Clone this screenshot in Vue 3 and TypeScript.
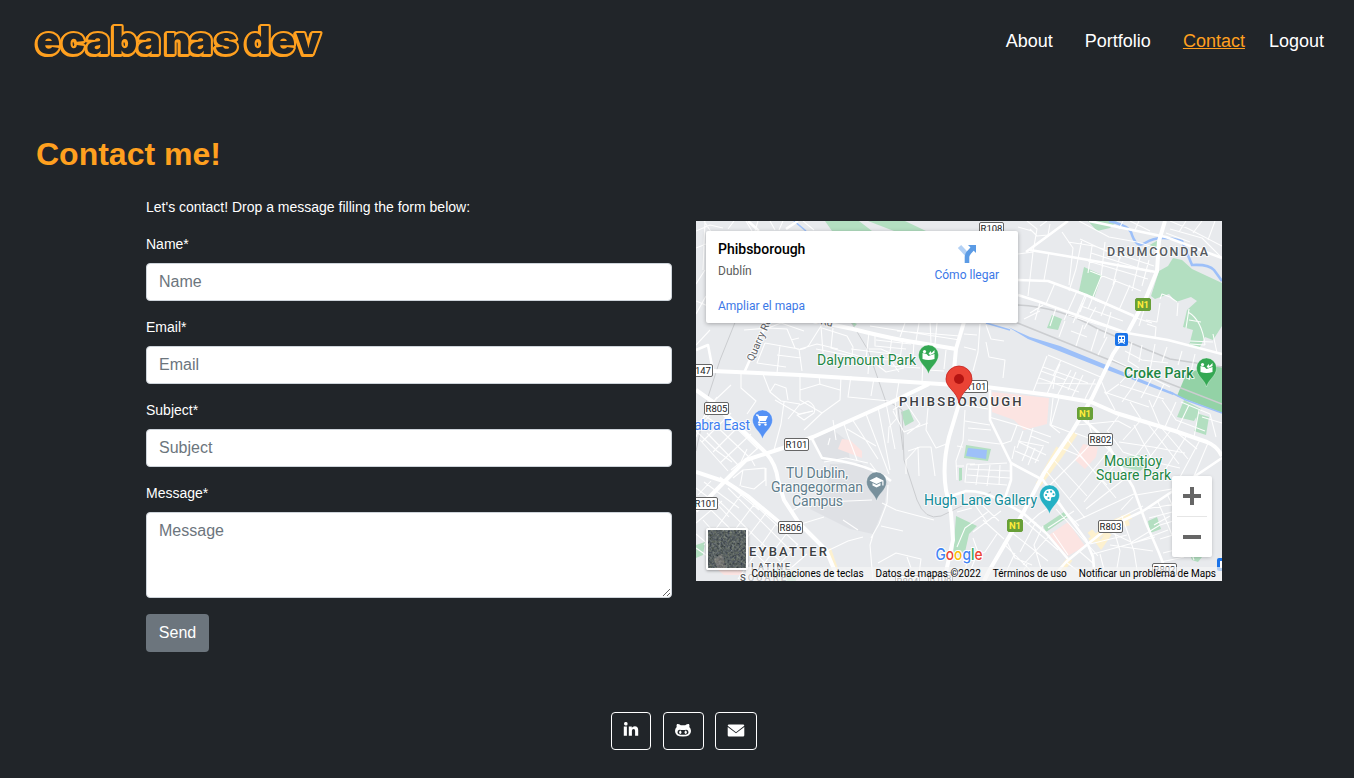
<script setup lang="ts">
interface MapLabel {
  x: number
  y: number
  w: number
  text: string
  size: number
  kind: string
}
interface Badge {
  x: number
  y: number
  w: number
  text: string
  kind: string
}
interface Pin {
  x: number
  y: number
  color: string
  icon: string
}

const links = [
  { text: 'About', active: false },
  { text: 'Portfolio', active: false },
  { text: 'Contact', active: true },
  { text: 'Logout', active: false },
]
const fields = ['Name', 'Email', 'Subject']
const credits = ['Combinaciones de teclas', 'Datos de mapas ©2022', 'Términos de uso', 'Notificar un problema de Maps']

const majorRoads = [
  'M713 371L800 375L925 383L986 387L1050 395L1091 402L1116 413L1175 431L1207 442Q1217 446 1222 456',
  'M1165 221L1159 241L1157 271L1146 298L1129 330L1113 354L1092 398L1073 430L1044 473L1023 513L989 571L984 581',
  'M829 324L853 329Q896 340 926 344L956 349L954 370M964 322L956 349',
  'M959 404L949 437Q942 465 946 490L951 513L953 540L944 581',
  'M929 384L896 400L813 437L783 448L746 460L726 480L696 511',
  'M696 390L713 402L739 427L766 453Q776 464 778 480L784 500L799 523L826 550L839 581',
  'M696 472L726 482L749 497L779 522',
]
const mediumRoads = [
  'M1127 333L1168 340L1222 354',
  'M990 390L990 420L1011 463L1011 480L1004 501',
  'M1011 463L1043 480L1066 513L1086 540L1093 557L1095 581',
  'M948 497L966 491Q985 491 999 500L1023 513L1046 533L1068 559',
  'M1049 581L1066 562L1089 543L1109 527L1143 511L1173 491L1222 458',
  'M1082 418L1103 437L1133 487L1146 523L1159 553L1170 581',
  'M811 437L822 458Q870 464 891 481',
  'M696 350L708 345L713 371M744 373L760 337L775 310',
  'M748 221L759 231M798 221L786 229',
  'M1026 252L1068 221M1030 250L1066 256L1156 272M1089 221L1166 237L1222 258',
  'M1018 280L1048 281L1086 295L1134 316M1018 295L1040 302L1127 333',
]
const minorRoads = [
  // North-west streets
  'M696 231L710 225L723 228M704 221L713 235M705 221L703 270M696 248L706 244M696 284L705 270M696 314L706 296M696 345L710 330M696 301L708 306M734 221L728 229M746 221L752 231M758 221L755 231M770 221L775 230M783 221L779 230M803 221L814 230',
  'M744 330L768 328L787 329L795 348Q803 352 809 345L821 326M768 328L781 323L804 331M765 343L799 349L802 371M780 345L777 373M765 343L757 363L786 367M801 358L777 355M822 328L847 336L853 347L852 356L816 349M800 349L817 344L838 349M791 340L799 338M821 326L823 353',
  'M741 372L741 388L756 401L747 414M763 374L770 392L781 401L800 404M770 392L775 384L786 388L788 400M800 374L800 400L822 413M775 400L799 414L813 411M784 402L781 424L774 450M800 404L788 419M822 413L804 430M822 413L840 400L841 376M800 390L820 384L819 375M819 384L840 390',
  'M833 328L831 348L869 359L868 374M869 332L866 359M869 349L881 349L890 353M851 349L900 355M875 334L875 346L906 349M876 340L911 344M892 336L889 360M903 338L899 366M914 341L913 357M875 360L914 359M876 364L886 372L904 368M887 356L899 372M891 366L920 368M923 359L922 384M946 350L944 369M926 344L927 370L944 371',
  'M851 376L848 397L889 401M874 378L871 396M899 381L896 400M931 344L930 320M870 326L960 340M905 323L900 337M919 323L916 341M937 323L935 344M897 331L960 336',
  // South-west streets
  'M713 402L731 385M717 397L704 415L717 424M707 415L696 425M709 402L696 437M717 407L696 431L717 451L732 462M731 413L702 442M742 423L713 452M751 434L720 463M760 446L733 471M723 415L758 449M714 424L749 457M707 433L738 465M700 440L728 471',
  'M800 405L808 401Q817 406 814 413L804 420L797 415L813 411',
  'M731 470L741 462L747 449M733 478L743 470L765 468L765 480L754 489L741 486M743 470L740 486M750 457L755 466M766 468L766 486',
  'M696 488L717 504L729 517M704 482L739 508M720 477L759 510M711 481L698 495M696 534L738 570M706 505L769 567M718 500L780 561M728 488L790 550M736 487L798 545M743 492L704 545M755 503L714 558M766 513L724 568M776 524L738 579M787 533L751 581M798 544L764 581M807 554L776 581',
  'M696 523L722 501M703 520L730 550M696 548L706 555L714 569M790 512L811 500L825 502M801 524L824 517M825 552L848 541L863 537M825 502L872 500',
  'M828 445L830 438M836 440L833 420M844 424L848 436L857 460M852 419L878 459M866 414L889 474M878 407L890 470M886 403L895 449M847 429L876 446M895 400L897 418L889 427L888 443M824 462L846 458L868 463M870 463L886 484M918 447L919 476M918 447L906 460L906 474',
  'M893 410L905 402L920 424L907 434M893 411L904 432L928 423M928 408L926 430L936 448L949 443M908 451L920 447L931 447L935 476M888 485L887 503L879 524L871 538M882 503L896 510L934 520M881 526L903 531M873 535L870 545L873 581M878 563L896 553L921 559L918 581M907 557L911 568M843 520L858 530',
  // Around the rail station and the northern terraces
  'M1027 221L1037 229L1033 252M1018 227L1032 231M1030 229L1037 236L1048 235L1050 224M1040 226L1047 221M1033 252L1028 296M1033 252L1018 254M1049 252L1044 280M1062 232L1073 248L1069 285M1082 239L1076 269L1069 291M1068 242L1094 246L1154 266M1080 239L1121 258M1091 253L1151 272M1088 261L1148 279M1090 271L1141 291M1092 246L1088 273M1105 242L1101 278M1121 251L1113 285M1140 257L1132 291M1149 260L1142 286',
  'M1055 283L1046 304M1085 295L1073 323M1077 291L1064 320M1130 285L1119 310M1116 279L1101 316M1101 277L1088 309M1087 294L1080 312M1095 300L1130 314M1081 306L1123 321M1068 315L1119 331M1111 312L1104 338M1096 307L1084 329M1083 303L1076 319M1056 308L1050 326M1040 303L1035 320M1065 321L1059 337M1083 325L1076 346M1098 329L1091 351M1107 337L1098 355M1087 337L1071 331M1030 313L1043 305M1024 319L1040 311',
  'M1079 221L1109 237L1137 242L1157 248M1130 221L1150 231M1139 221L1135 230M1170 221L1189 229L1222 246M1186 221L1179 232M1202 221L1193 233M1215 221L1208 240M1170 229L1202 238L1222 258M1166 233L1190 242M1123 221L1119 229',
  'M1160 299L1162 294L1170 297L1177 302M1147 324L1156 327L1155 338M1133 317L1152 323M1145 307L1139 326M1160 303L1157 322L1146 320M1178 303L1177 316M1189 309L1186 328M1188 312Q1202 320 1205 345M1189 320L1201 322M1205 345L1190 344M1190 341L1213 342M1217 353L1213 334',
  'M1132 342L1128 361L1139 368M1142 345L1139 362M1155 344L1150 370M1167 347L1162 362M1182 351L1178 365M1195 354L1189 380M1210 358L1205 376M1125 351L1142 360L1168 363M1111 359L1137 371L1170 387M1133 369L1120 383M1141 373L1130 391M1152 378L1141 398M1164 384L1153 407M1132 388L1122 402M1100 378L1107 395L1115 410M1119 384L1105 394M1120 385L1164 399M1104 392L1149 407',
  'M1047 356L1033 392M1060 364L1047 394M1071 370L1057 396M1083 375L1072 397M1095 379L1085 399M1043 367L1088 383M1039 378L1079 392M1041 371L1066 380M1037 383L1096 384M1053 389L1055 377M1048 355L1103 378M1061 360L1053 376M1076 372L1068 390',
  'M980 324L978 352L973 371M964 347L976 350M977 335L964 334M986 342L989 357L1005 360L1003 378M986 325L991 339L1004 341',
  // South-east streets
  'M1053 398L1050 425L1060 433M1059 398L1051 425L1072 433M989 417L1020 426L1051 437M1017 425L1011 441L1002 444M1018 441L1044 446M1023 431L1017 448M1033 428L1027 448M1015 451L1039 461M1019 442L1046 455M1015 446L1012 459M1028 447L1022 461M1035 448L1028 465M1043 447L1035 463M1031 436L1049 443',
  'M965 410L963 441L956 461L957 480M968 428L991 430M968 440L1000 444M975 464L967 464L965 482L1007 485M979 464L976 485M990 465L987 486M1000 465L999 485M968 469L1010 471M967 475L1010 478M970 465L1007 463M957 446L963 447M956 466L964 466M958 404L988 409M990 425L965 421',
  'M1075 433L1102 443L1121 462M1061 448L1080 456L1107 485M1053 459L1087 496M1047 472L1085 518M1067 439L1116 498M1099 434L1085 450L1045 490M1111 448L1070 498M1119 460L1084 502M1127 477L1086 509M1136 493L1074 522M1143 506L1112 522M1077 425L1118 421L1131 428M1086 412L1092 435M1121 413L1108 430M1141 420L1123 440M1159 426L1134 458M1171 430L1146 462M1187 435L1162 475M1200 440L1173 490M1208 443L1192 481',
  'M1107 430L1123 452L1154 462L1180 468M1119 442L1153 447L1185 453M1134 425L1153 461M1145 420L1179 464M1160 426L1188 459M1175 431L1197 449M1181 402L1210 414L1216 437M1162 400L1176 420L1205 431M1149 400L1160 426M1130 402L1141 419M1176 402L1165 427M1189 405L1176 432M1199 410L1194 437M1202 417L1222 423',
  'M1136 495L1178 488L1186 495M1145 509L1188 502M1149 518L1180 510M1133 497L1121 510M1158 502L1168 525L1178 550M1167 494L1182 525L1194 560M1122 516L1134 551L1137 570M1112 523L1120 551L1117 568M1108 531L1133 543L1168 530M1090 544L1127 535M1093 554L1155 537M1100 554L1107 581M1110 545L1153 551M1132 542L1160 525L1180 519M1160 539L1173 535M1163 553L1191 546M1161 562L1184 557M1170 516L1154 525',
  'M1050 495L1079 526M1056 509L1098 556M1060 500L1039 514L1028 524M1074 511L1048 528M1053 533L1068 555M1043 526L1034 545L1042 572M1025 520L1006 540L1015 558L1032 565M1011 532L1048 561M1003 543L1038 578M1019 516L1058 550M1036 522L1020 552M1050 535L1023 565M997 534L985 552L963 560M973 538L978 552L971 569M960 500L975 505L987 522M976 499L999 521M957 512L972 508M989 511L965 528L957 547M1001 511L973 532M983 520L1004 539M969 552L963 581M1015 553L1002 581M1027 564L1018 581M1066 562L1082 574M1079 551L1094 564',
]

const labels: MapLabel[] = [
  { x: 1107, y: 255.5, w: 101, text: 'DRUMCONDRA', size: 12.5, kind: 'area' },
  { x: 899, y: 406, w: 122.5, text: 'PHIBSBOROUGH', size: 13, kind: 'area strong' },
  { x: 749, y: 556, w: 78, text: 'EYBATTER', size: 13, kind: 'area strong' },
  { x: 751, y: 570, w: 39, text: 'LATINE', size: 9.5, kind: 'area' },
  { x: 740, y: 580.5, w: 46, text: 'SQUARE', size: 9.5, kind: 'area' },
  { x: 817, y: 365, w: 99, text: 'Dalymount Park', size: 14, kind: 'green' },
  { x: 1124, y: 378, w: 69.5, text: 'Croke Park', size: 14, kind: 'green bold' },
  { x: 1104, y: 466, w: 58, text: 'Mountjoy', size: 14, kind: 'green' },
  { x: 1096, y: 480, w: 75, text: 'Square Park', size: 14, kind: 'green' },
  { x: 694, y: 430, w: 56, text: 'abra East', size: 14, kind: 'blue' },
  { x: 786, y: 478, w: 62, text: 'TU Dublin,', size: 14, kind: 'slate' },
  { x: 771, y: 492, w: 92, text: 'Grangegorman', size: 14, kind: 'slate' },
  { x: 792, y: 506, w: 51, text: 'Campus', size: 14, kind: 'slate' },
  { x: 924, y: 505, w: 113, text: 'Hugh Lane Gallery', size: 14, kind: 'teal' },
]
const badges: Badge[] = [
  { x: 979, y: 222, w: 25, text: 'R108', kind: 'regional' },
  { x: 687, y: 364, w: 26, text: 'R147', kind: 'regional' },
  { x: 963, y: 380, w: 25, text: 'R101', kind: 'regional' },
  { x: 704, y: 402, w: 25, text: 'R805', kind: 'regional' },
  { x: 784, y: 438, w: 25, text: 'R101', kind: 'regional' },
  { x: 693, y: 497, w: 25, text: 'R101', kind: 'regional' },
  { x: 778, y: 521, w: 25, text: 'R806', kind: 'regional' },
  { x: 1088, y: 433, w: 25, text: 'R802', kind: 'regional' },
  { x: 1098, y: 520, w: 25, text: 'R803', kind: 'regional' },
  { x: 895, y: 575, w: 25, text: 'R804', kind: 'regional' },
  { x: 928, y: 572, w: 25, text: 'R108', kind: 'regional' },
  { x: 1152, y: 563, w: 25, text: 'R802', kind: 'regional' },
  { x: 1135, y: 298, w: 16, text: 'N1', kind: 'national' },
  { x: 1077, y: 407, w: 16, text: 'N1', kind: 'national' },
  { x: 1007, y: 519, w: 16, text: 'N1', kind: 'national' },
]
const pins: Pin[] = [
  { x: 928.5, y: 374, color: '#34a853', icon: 'field' },
  { x: 1206.5, y: 387, color: '#34a853', icon: 'field' },
  { x: 762.5, y: 439, color: '#5491f5', icon: 'cart' },
  { x: 876.5, y: 501, color: '#78909c', icon: 'school' },
  { x: 1049.5, y: 514, color: '#24b0c4', icon: 'art' },
]
</script>

<template>
  <div class="page">
    <header class="top">
      <svg class="logo" width="296" height="44" viewBox="32 18 296 44" role="img" aria-label="ecabanas dev">
        <text y="54" x="36.5 61.5 86.5 112 137.5 165 189.5 215 239 245.5 271.5 296">ecabanas dev</text>
      </svg>
      <nav>
        <a v-for="link in links" :key="link.text" :class="{ active: link.active }">{{ link.text }}</a>
      </nav>
    </header>

    <h1>Contact me!</h1>

    <main>
      <form @submit.prevent>
        <p>Let's contact! Drop a message filling the form below:</p>
        <div v-for="field in fields" :key="field" class="group">
          <label :for="field">{{ field }}*</label>
          <input :id="field" type="text" :placeholder="field" />
        </div>
        <div class="group">
          <label for="Message">Message*</label>
          <textarea id="Message" placeholder="Message"></textarea>
        </div>
        <button type="submit">Send</button>
      </form>

      <section class="map">
        <svg class="canvas" width="526" height="360" viewBox="696 221 526 360">
          <rect x="696" y="221" width="526" height="360" fill="#e8eaed" />
          <g fill="#dfe1e5">
            <path d="M814 438L833 430L846 440L850 459L822 461Z" />
            <path d="M830 464L861 463L879 477L888 483L884 507L873 534L850 529L810 509L826 491Z" />
          </g>
          <g fill="#b3dfc1">
            <path d="M825 221H859L872 231H832Z M868 221H905L926 231H894Z" />
            <path d="M1088 221H1117L1110 228L1097 231Z" />
            <path d="M1084 267L1102 275L1094 298L1079 291Z" />
            <path d="M1052 315L1062 319L1058 330L1047 328Z" />
            <path d="M1159 271L1168 266L1173 258L1182 260L1192 269L1222 283V326L1213 340L1205 337L1199 349L1189 346L1193 330L1183 327L1187 310L1197 301L1191 297L1176 302L1169 294L1155 299L1151 296Z" />
            <path d="M1187 372L1222 366V413L1177 396Z" fill="#93d2a6" />
            <path d="M1148 246L1160 239L1156 248Z" />
            <path d="M901 412L909 409L914 421L905 426Z" />
            <path d="M959 468H962V480L959 481ZM956 516L977 526L969 534L965 552L953 556Z" />
            <path d="M1043 526L1064 512L1068 517L1046 532Z" />
            <path d="M1184 400L1201 409L1194 421L1177 417Z M1196 413L1209 417L1206 435L1194 431L1197 425Z M1126 457L1140 455L1150 463L1140 471L1123 467Z M1148 521L1157 517L1161 529L1150 533Z M1190 555L1202 557L1198 562L1192 560Z M696 545L705 542L703 555L696 558Z M772 569L795 571L796 581H777Z M850 321L857 324L854 327Z" />
          </g>
          <g fill="#fce4e2">
            <path d="M842 439L850 440L862 451V458L838 449Z" />
            <path d="M992 392L1049 398L1047 424L1024 430L1014 420L992 412Z" />
            <path d="M1083 444L1098 447L1096 457L1085 469L1075 460Z" />
            <path d="M1049 535L1068 522L1085 546L1068 556Z" />
            <path d="M718 570L736 562L744 575H724Z" />
          </g>
          <g class="amber">
            <path d="M1075 433L1058 458L1038 485M1059 448L1043 477M1124 515L1127 526M1115 522L1131 516M1090 531L1101 545L1109 533" />
            <path d="M828 549L837 575M1070 559L1062 569L1051 580M1090 541L1107 529" />
          </g>
          <path class="rail" d="M738 315L720 360L707 400L696 451M842 307L868 350L887 405M888 401L902 410L904 460L917 500Q925 521 941 516L991 492M898 408L903 450" />
          <path class="rail heavy" d="M1018 305Q1060 307 1098 329L1138 346L1170 359L1222 367" />
          <path class="rail heavy" d="M1000 316L1102 357L1168 383L1222 404" />
          <path class="water" d="M794 221L806 231M986 323L1010 330M1170 392L1186 400L1222 413" />
          <path d="M1008 327L1030 337L1060 346L1104 364L1174 393L1173 395L1102 368L1059 351L1028 339Z" fill="#9dc0f9" />
          <path class="water river" d="M1109 221Q1127 225 1131 232Q1136 249 1145 243Q1159 234 1182 241L1192 265Q1209 264 1214 270L1222 281" />
          <path d="M966 445L991 449L988 461L964 458Z" fill="#b3dfc1" />
          <path d="M968 448L987 450L986 459L966 456Z" fill="#9dc0f9" />
          <g class="minor"><path v-for="d in minorRoads" :key="d" :d="d" /></g>
          <g class="medium"><path v-for="d in mediumRoads" :key="d" :d="d" /></g>
          <g class="major"><path v-for="d in majorRoads" :key="d" :d="d" /></g>

          <text class="label street" transform="translate(753 362) rotate(-66)">Quarry Road</text>
          <text class="label street" transform="translate(812 322) rotate(14)">e Rd</text>

          <g v-for="badge in badges" :key="`${badge.x}-${badge.text}`" :class="['badge', badge.kind]">
            <rect :x="badge.x + 0.5" :y="badge.y + 0.5" :width="badge.w - 1" height="12" rx="1.5" />
            <text :x="badge.x + badge.w / 2" :y="badge.y + 10">{{ badge.text }}</text>
          </g>
          <text
            v-for="label in labels"
            :key="label.text"
            :class="['label', label.kind]"
            :x="label.x"
            :y="label.y"
            :font-size="label.size"
            :textLength="label.w"
          >{{ label.text }}</text>

          <g v-for="pin in pins" :key="pin.x" :transform="`translate(${pin.x} ${pin.y})`">
            <path d="M0 0C-1.4-7-10-11-10-19A10 10 0 0 1 10-19C10-11 1.4-7 0 0Z" :fill="pin.color" stroke="#fff" stroke-opacity=".45" stroke-width=".7" />
            <g fill="#fff" transform="translate(0 -19)">
              <g v-if="pin.icon === 'field'">
                <path d="M-6-2L-2-1L0 1L6-1V4Q0 6-6 4ZM-6 3Q-4-1-1 2" />
                <circle cx="-4" cy="-3.4" r="1.6" /><path d="M0-1L2-4L3-2L6-5L6-2L2 0Z" />
              </g>
              <g v-else-if="pin.icon === 'cart'">
                <path d="M-6.5-5.5H-4.2L-3.6-4H5.5L3.2 1H-2.5L-3 2H4V3.3H-4.8L-3.5 .6L-5.2-4.2H-6.5Z" /><circle cx="-3" cy="4.6" r="1.2" /><circle cx="3" cy="4.6" r="1.2" />
              </g>
              <g v-else-if="pin.icon === 'school'">
                <path d="M-7-1.5L0-5L7-1.5V3.5H5.8V-.8L0 2ZM-4 1L0 3L4 1V3.4L0 5.5L-4 3.4Z" />
              </g>
              <g v-else>
                <path d="M0-6A6 6 0 1 0 0 6Q2 6 1.4 3.8Q1 2 3 2H4Q6 2 6-.5Q5.5-6 0-6Z" />
                <g :fill="pin.color"><circle cx="-3.4" cy="0" r="1.1" /><circle cx="-2" cy="-3" r="1.1" /><circle cx="1.6" cy="-3.4" r="1.1" /><circle cx="4" cy="-.8" r="1" /><circle cx="-1" cy="3" r="1" /></g>
              </g>
            </g>
          </g>

          <g transform="translate(1115 333)">
            <rect width="13" height="13" rx="2" fill="#1a73e8" />
            <path d="M4 2.5H9Q10 2.5 10 3.5V8.5Q10 9.5 9 9.5L10 11H9L8 9.7H5L4 11H3L4 9.5Q3 9.5 3 8.5V3.5Q3 2.5 4 2.5Z" fill="#fff" />
            <path d="M4 4H6V6H4ZM7 4H9V6H7ZM4 7.3H5.2V8.4H4ZM7.8 7.3H9V8.4H7.8Z" fill="#1a73e8" />
          </g>
          <rect x="1217" y="558" width="13" height="13" rx="2" fill="#1a73e8" />
          <path d="M1220 561H1222V568H1220Z" fill="#fff" />

          <path d="M959 403C957 391 946 388 946 379A13 13 0 0 1 972 379C972 388 961 391 959 403Z" fill="#ea4335" stroke="#c5221f" stroke-width=".8" />
          <circle cx="959" cy="379" r="5" fill="#b31412" />

          <text class="google" x="935.5" y="559.5" textLength="47" lengthAdjust="spacingAndGlyphs"><tspan fill="#4285f4">G</tspan><tspan fill="#ea4335">o</tspan><tspan fill="#fbbc04">o</tspan><tspan fill="#4285f4">g</tspan><tspan fill="#34a853">l</tspan><tspan fill="#ea4335">e</tspan></text>
        </svg>

        <div class="card">
          <div class="place">
            <strong>Phibsborough</strong>
            <span>Dublín</span>
            <a>Ampliar el mapa</a>
          </div>
          <div class="directions">
            <svg width="20" height="20" viewBox="0 0 20 20">
              <path d="M2.5 2.5L10 10.5" stroke="#b3d1f5" stroke-width="4.6" fill="none" />
              <path d="M10 19V13Q10 10.5 12 8.5L16 4" stroke="#5b9be5" stroke-width="4.6" fill="none" />
              <path d="M11 1H19V9Z" fill="#5b9be5" />
            </svg>
            <a>Cómo llegar</a>
          </div>
        </div>

        <div class="satellite">
          <svg width="38" height="38" viewBox="0 0 38 38">
            <filter id="grain" x="0" y="0" width="100%" height="100%" color-interpolation-filters="sRGB">
              <feTurbulence type="fractalNoise" baseFrequency=".45" numOctaves="3" seed="7" />
              <feColorMatrix values=".4 .2 0 0 .05  .4 .2 0 0 .08  .3 .2 .1 0 .08  0 0 0 0 1" />
            </filter>
            <rect width="38" height="38" filter="url(#grain)" />
            <path d="M6 29L14 24L18 38H9Z" fill="#b5aaa2" opacity=".3" />
          </svg>
        </div>

        <div class="zoom">
          <button type="button" aria-label="Acercar"><i class="bar"></i><i class="bar upright"></i></button>
          <button type="button" aria-label="Alejar"><i class="bar"></i></button>
        </div>

        <div class="credits">
          <span v-for="credit in credits" :key="credit">{{ credit }}</span>
        </div>
      </section>
    </main>

    <footer>
      <a class="linkedin" aria-label="LinkedIn">
        <svg width="16" height="16" viewBox="0 0 16 16"><path d="M.8 5.5H3.9V14.8H.8ZM2.4 1A1.8 1.8 0 1 1 2.4 4.5A1.8 1.8 0 0 1 2.4 1ZM5.8 5.5H8.8V6.8Q9.7 5.2 11.8 5.2Q15.2 5.2 15.2 9V14.8H12.1V9.8Q12.1 7.9 10.6 7.9Q8.9 7.9 8.9 9.8V14.8H5.8Z" /></svg>
      </a>
      <a class="github" aria-label="GitHub">
        <svg width="18" height="16" viewBox="0 0 18 16"><path fill-rule="evenodd" d="M3 2Q5 1.8 6.8 3.3H11.2Q13 1.8 15 2Q15.8 3.5 15.3 5Q17 6.5 17 9Q17 14.5 9 14.5Q1 14.5 1 9Q1 6.5 2.7 5Q2.2 3.5 3 2ZM5.5 7.8Q3.5 8 3.5 10.2Q3.5 12.8 9 12.8Q14.5 12.8 14.5 10.2Q14.5 8 12.5 7.8Q9 8.3 5.5 7.8Z" /><ellipse cx="6.3" cy="10.2" rx="1.1" ry="1.7" /><ellipse cx="11.7" cy="10.2" rx="1.1" ry="1.7" /></svg>
      </a>
      <a class="mail" aria-label="Email">
        <svg width="18" height="16" viewBox="0 0 18 16"><path d="M2 2.5H16Q17.3 2.5 17.3 3.8L9 10.2L.7 3.8Q.7 2.5 2 2.5ZM.7 4.9L9 11.3L17.3 4.9V13.2Q17.3 14.5 16 14.5H2Q.7 14.5 .7 13.2Z" /></svg>
      </a>
    </footer>
  </div>
</template>

<style>
body {
  margin: 0;
  background: #212529;
}
</style>

<style scoped>
.page {
  box-sizing: border-box;
  height: 778px;
  overflow: hidden;
  background: #212529;
  color: #fff;
  font-family: "Liberation Sans", Arial, sans-serif;
}
.page * {
  box-sizing: border-box;
}
.top {
  display: flex;
  justify-content: space-between;
  padding: 18px 30px 0 32px;
  height: 80px;
}
.logo {
  display: block;
}
.logo text {
  font: 900 39px Inter, sans-serif;
  fill: #212529;
  stroke: #ffa01f;
  stroke-width: 4.2px;
  stroke-linejoin: round;
  paint-order: stroke;
  filter: drop-shadow(-0.5px 1px 0 #ffa01f);
}
nav {
  display: flex;
  gap: 32px;
  height: 46px;
  align-items: center;
  font-size: 18px;
}
nav a:last-child {
  margin-left: -8px;
}
.active {
  color: #ffa01f;
  text-decoration: underline;
}
h1 {
  margin: 55px 0 0 36px;
  font-size: 32px;
  line-height: 38px;
  color: #ffa01f;
}
main {
  display: grid;
  grid-template-columns: 526px 526px;
  gap: 24px;
  height: 455px;
  margin: 24px 0 0 146px;
}
p {
  margin: 0 0 16px;
  font-size: 14px;
  line-height: 21px;
}
.group {
  margin-bottom: 16px;
}
label {
  display: block;
  margin-bottom: 8px;
  font-size: 14px;
  line-height: 21px;
}
input,
textarea {
  display: block;
  width: 100%;
  height: 38px;
  padding: 6px 12px;
  border: 1px solid #ced4da;
  border-radius: 4px;
  background: #fff;
  font: 16px/24px "Liberation Sans", Arial, sans-serif;
}
textarea {
  height: 86px;
}
input::placeholder,
textarea::placeholder {
  color: #6c757d;
  opacity: 1;
}
form > button {
  display: block;
  height: 38px;
  width: 63px;
  padding: 0;
  border: 0;
  border-radius: 4px;
  background: #6c757d;
  color: #fff;
  font: 16px/24px "Liberation Sans", Arial, sans-serif;
}
.map {
  position: relative;
  width: 526px;
  height: 360px;
  margin-top: 24px;
  overflow: hidden;
  font-family: Roboto, sans-serif;
}
.canvas {
  display: block;
}
.minor path,
.medium path,
.major path {
  fill: none;
  stroke: #fff;
  stroke-linejoin: round;
}
.minor path {
  stroke-width: 1.1px;
  stroke-opacity: 0.95;
}
.medium path {
  stroke-width: 2.6px;
}
.major path {
  stroke-width: 4px;
}
.amber path {
  fill: none;
  stroke: #fdf1cf;
  stroke-width: 6px;
}
.rail {
  fill: none;
  stroke: #cbcdd0;
  stroke-width: 1px;
}
.rail.heavy {
  stroke-width: 1.5px;
}
.water {
  fill: none;
  stroke: #9dc0f9;
  stroke-width: 1.6px;
}
.river {
  stroke-width: 2.6px;
}
.label {
  stroke: #fff;
  stroke-opacity: 0.8;
  stroke-width: 2px;
  stroke-linejoin: round;
  paint-order: stroke;
}
.street {
  font-size: 10.5px;
  fill: #5f6368;
}
.area {
  fill: #55595d;
  font-weight: 500;
}
.strong {
  fill: #3c4043;
}
.green {
  fill: #1e8744;
}
.bold {
  font-weight: 500;
}
.blue {
  fill: #3f7ff0;
}
.slate {
  fill: #607d8b;
}
.teal {
  fill: #128c99;
}
.badge text {
  font-size: 9.5px;
  text-anchor: middle;
  fill: #202124;
}
.badge rect {
  fill: #fff;
  stroke: #666;
}
.badge.national rect {
  fill: #689f38;
  stroke: #689f38;
}
.badge.national text {
  fill: #ffeb3b;
  font-weight: 700;
}
.google {
  font: 500 16px Inter, sans-serif;
  stroke: #fff;
  stroke-width: 2px;
  paint-order: stroke;
}
.card {
  position: absolute;
  left: 10px;
  top: 10px;
  display: flex;
  justify-content: space-between;
  width: 312px;
  height: 92px;
  padding: 10px 19px 0 12px;
  background: #fff;
  border-radius: 2px;
  box-shadow: 0 1px 4px rgba(0, 0, 0, 0.3);
  font-size: 12px;
}
.card a {
  color: #3b78e7;
  line-height: 16px;
}
.place {
  display: flex;
  flex-direction: column;
}
.place strong {
  color: #000;
  font-size: 14px;
  font-weight: 500;
  line-height: 16px;
}
.place span {
  margin: 6px 0 19px;
  color: #5b5b5b;
  line-height: 16px;
}
.directions {
  display: flex;
  flex-direction: column;
  align-items: center;
  padding-top: 3px;
  gap: 3px;
}
.directions a {
  white-space: nowrap;
}
.satellite {
  position: absolute;
  left: 10px;
  top: 307px;
  width: 42px;
  height: 42px;
  border: 2px solid #fff;
  border-radius: 2px;
  box-shadow: 0 1px 3px rgba(0, 0, 0, 0.35);
  overflow: hidden;
}
.satellite svg {
  display: block;
}
.zoom {
  position: absolute;
  left: 476px;
  top: 255px;
  width: 40px;
  height: 81px;
  background: #fff;
  border-radius: 2px;
  box-shadow: 0 1px 4px -1px rgba(0, 0, 0, 0.3);
}
.zoom button {
  display: grid;
  place-items: center;
  width: 40px;
  height: 40px;
  padding: 0;
  border: 0;
  background: none;
}
.zoom button + button {
  height: 41px;
  background: linear-gradient(#e6e6e6, #e6e6e6) 5px 0 / 30px 1px no-repeat;
}
.bar {
  grid-area: 1 / 1;
  width: 18px;
  height: 4px;
  background: #666;
}
.upright {
  width: 4px;
  height: 18px;
}
.credits {
  position: absolute;
  right: 0;
  bottom: 0;
  display: flex;
  gap: 12px;
  height: 14px;
  padding: 0 6px;
  background: rgba(245, 245, 245, 0.7);
  color: #000;
  font-size: 10px;
  line-height: 14px;
  white-space: nowrap;
}
footer {
  display: flex;
  gap: 11.5px;
  margin: 60px 0 0 611px;
}
footer a {
  display: flex;
  justify-content: center;
  width: 40px;
  height: 38px;
  padding-top: 9px;
  border: 1px solid #fff;
  border-radius: 4px;
}
footer svg {
  fill: #fff;
}
.linkedin svg {
  margin-top: -1px;
}
.github {
  width: 41px;
}
.mail {
  width: 42px;
}
</style>
